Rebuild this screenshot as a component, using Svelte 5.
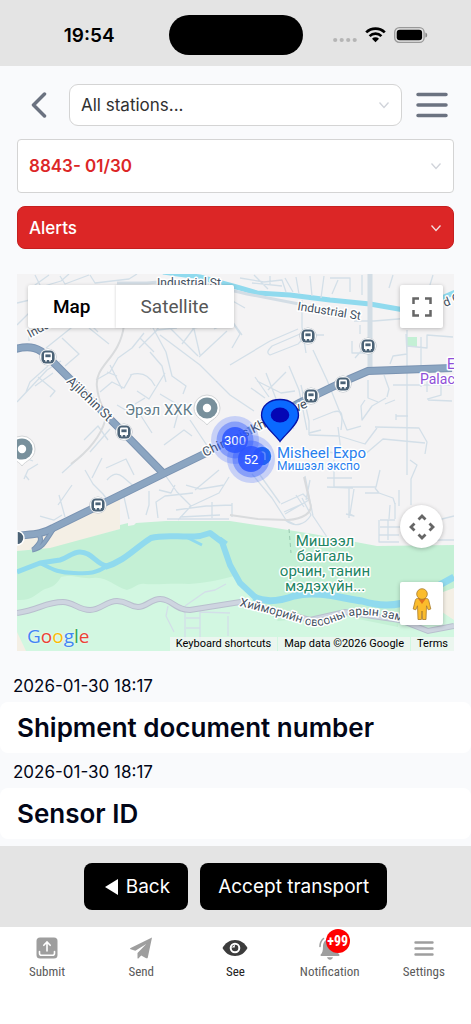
<script lang="ts">
  interface Record {
    date: string;
    title: string;
  }

  const records: Record[] = [
    { date: '2026-01-30 18:17', title: 'Shipment document number' },
    { date: '2026-01-30 18:17', title: 'Sensor ID' },
  ];

  const tabs = [
    { id: 'submit', label: 'Submit' },
    { id: 'send', label: 'Send' },
    { id: 'see', label: 'See' },
    { id: 'notification', label: 'Notification', badge: '+99' },
    { id: 'settings', label: 'Settings' },
  ];

  const busStops = [
    [48, 357],
    [124, 432],
    [98, 505],
    [308, 336],
    [368, 346],
    [343, 384],
    [311, 396],
  ];

  const places = [
    [207, 408],
    [22, 449],
  ];

  const clusters = [
    { x: 235, y: 440, count: 300 },
    { x: 251, y: 459, count: 52 },
  ];

  let activeTab = $state('see');
  let mapType = $state('map');
</script>

{#snippet chevron()}
  <svg class="chevron" viewBox="0 0 12 12" aria-hidden="true"><path d="M1.5 3.5 6 8.5l4.5-5" /></svg>
{/snippet}

<div class="app">
  <div class="status">
    <span class="time">19:54</span>
    <span class="island"></span>
    <div class="signals">
      <svg width="24" height="6" viewBox="0 0 24 6" fill="#b5b5b5">
        <circle cx="2.2" cy="3" r="2.1" /><circle cx="8.7" cy="3" r="2.1" />
        <circle cx="15.2" cy="3" r="2.1" /><circle cx="21.7" cy="3" r="2.1" />
      </svg>
      <svg width="21" height="16" viewBox="0 0 21 16" fill="none" stroke="#000" stroke-width="2.7">
        <path d="M1.2 5.4a13.4 13.4 0 0 1 18.6 0M4.6 9.1a8.5 8.5 0 0 1 11.8 0" />
        <path d="M10.5 15.2 7 11.8a5 5 0 0 1 7 0z" fill="#000" stroke="none" />
      </svg>
      <svg width="34" height="16" viewBox="0 0 34 16">
        <rect x=".7" y=".7" width="29.4" height="14.6" rx="4.6" fill="none" stroke="#999" stroke-width="1.3" />
        <rect x="2.7" y="2.7" width="25.4" height="10.6" rx="3" />
        <path d="M31.4 5.4c2.4.8 2.4 4.4 0 5.2z" fill="#888" />
      </svg>
    </div>
  </div>

  <main>
    <header class="topbar">
      <button class="icon-button" aria-label="Back">
        <svg width="16" height="26" viewBox="0 0 16 26"><path d="M13.5 2 2.5 13l11 11" /></svg>
      </button>
      <div class="field">
        <select class="stations" aria-label="Station">
          <option>All stations...</option>
        </select>
        {@render chevron()}
      </div>
      <button class="icon-button" aria-label="Menu">
        <svg width="32" height="26" viewBox="1 0 32 26"><path d="M3 2.5h28M3 13h28M3 23.5h28" /></svg>
      </button>
    </header>

    <div class="filters">
      <div class="field">
        <select class="shipment" aria-label="Shipment">
          <option>8843- 01/30</option>
        </select>
        {@render chevron()}
      </div>
      <div class="field light">
        <select class="alerts" aria-label="Alerts">
          <option>Alerts</option>
        </select>
        {@render chevron()}
      </div>
    </div>

    <section class="map" aria-label="Map">
      <svg class="canvas" viewBox="17 274 437 377" preserveAspectRatio="xMidYMid slice">
        <rect x="17" y="274" width="437" height="377" fill="#f4f3f4" />

        <!-- land cover -->
        <path d="M17 541 120 499v30L50 549l-33 2z" fill="#f4efe5" />
        <path d="M17 551 50 548 120 529v-4l8-2v3l6-1 2-2 30-2h64l33 5 50 8 64 12 77-1V651H17z" fill="#c4f0d5" />
        <path d="M17 600c16 1 18-6 28-11 8-2 12-5 16-12 12-3 18 2 32 1 14-2 20 8 34 12 8-2 10-7 18-6 12 1 24-1 44 0 16-1 26-3 45-8l20 22 50 5 60 7 40 5 50-12v48H17z" fill="#d2f7e1" />
        <path d="M255 600c24-20 60-8 110 0l35 7-2 20-60-12-60 6z" fill="#c4f0d5" />
        <path d="M17 632l9 19h-9zM454 588l-22 8 4 12 18 12z" fill="#f4efe5" />
        <rect x="407" y="337" width="10" height="10" fill="#c4f0d5" />

        <!-- rivers -->
        <g class="water">
          <path d="M163 272 200 277l40 11 17 5 33 2 40 5 40 4 40 7 34-14 14-6" stroke-width="5" />
          <path d="M17 572 40 563l20-3c8-2 12-8 20-8 12 0 16 12 27 14" stroke-width="5" />
          <path d="M40 563c12 6 18 10 34 10 16 1 22 0 33-7" stroke-width="4" />
          <path d="M105 567c20-6 30-19 46-29 14-4 32 0 49-2l10-3 12 9 8 23 10 18 15 14" stroke-width="6" />
          <path d="M186 537l16 8M220 538l7 5" stroke-width="3" />
          <path d="M254 597c12 6 26 4 40-1 24-6 50 3 68 5 16 5 36 6 54-3l38-21" stroke-width="7" />
        </g>

        <!-- minor streets -->
        <g class="streets">
          <path d="M17 325l20-20-2-20 14-10M35 275l6 12 20-6 8-7M17 303l17-4 12 8M60 276l5 8 24-9M90 275l5 8 34-4 8-5" />
          <path d="M46 348l30-24 24-10 12-16M26 392l4-10 18-16M17 402l30-32 14-9M62 338l17 16-14 12M89 328l20 16M84 318l14 14M29 341v-16M38 377l17 14-5 6M35 386l18-13" />
          <path d="M96 380l14-8 8-14 14-10 12-15M100 392l12-10 12 6 8-14M110 365l12 24M107 372l10 4M130 375c12-4 20 1 25 11M137 391l12 8 16-26M145 398l-10 6M150 352l12 14 4 16M139 348l18-18 20-2M154 352l-14-14" />
          <path d="M153 328l13 24 6 24 14 10-3 8M166 317l-10 14M150 328l26-14M176 315l18 14 6 26M182 344l12-16 20-4M160 335l40 30 30 30 24 16M170 328l28 28M199 357l28-26" />
          <path d="M214 329l18-8 10 14M200 290l24 20 16 24-8 14M215 291l30 17M117 405l17 10 22-9M84 440l14-14 10 14M90 452l20-23M102 458l-10 20M106 468l20-9 8 16M134 405l18 28M160 394l20 12-6 22M164 445l20-15 8 6M190 420l20 30" />
          <path d="M24 479l4-9 10-6M62 473l20-18M17 455l16 6M29 480l-4-5M85 470l8 14 10 10 3 4M107 480c5-6 10-8 16-3l14 12M58 505l14-20M59 495l6 22M40 516l14 4 8-5M124 497l5 22M149 491v14l-3 10M158 518l-2-16 9-6 28-3M163 472l14 20 14 14-13 14M176 510l30-4 26-1M159 490l12 3 4-8M195 490l24-20M186 485l14 4 24-4M167 519h62M180 517l40-2M212 502v16M232 503v14M189 507l30-14 10-16" />
          <path d="M240 278l24 4 18-2 4 12M270 276v8M285 278l8 14M296 277l3 17M310 276l2 20M324 276l-3 22M330 278h20v14M252 283l30 3M338 280l-6 14M362 275v20M254 275l14 14M393 275l-4 13M407 288l-2 22M433 275l-4 13" />
          <path d="M302 300v27l4 26M230 365l40-24 28-12M270 355l28-11c4-3 6-9 2-10l-28 12c-4 4-6 7-2 9zM313 350l14 30 20 50 14-4M255 377l14 20M266 373l14 36 14 20M289 366l10 24 8 40M301 385l8 36v14M265 398l-14-10M257 381l24 12 14-2M268 390l18-18" />
          <path d="M308 335h16M354 321h20l36-3M360 325v9M352 341v12h12M355 358l7-8M390 364l3-8 14-2-1-20M407 330v145M421 337v50M407 346l20 2v-13l26 2M393 385h60M427 370v22M441 375v20l-14 4M420 381h30M384 375l5 14-2 8M365 400l-4 6 1 14 10-14 14-8M428 400l24 1M396 416h12M396 420v-6M368 380v18l10 4M385 404l10-4" />
          <path d="M309 433l12-3M309 435l30 1 26 8 12-16M375 427l44 1 8 14-2 12M313 420l20-8c10-3 10 2 8 18M309 450l54 6 20-17 42 4M338 427l3 24M334 458v29h30M327 487l26 1M349 488v30M327 478h25M354 489l-4 25 4 2-8-2M362 487h14l4-17M375 488l4 5 14 5 2 6M410 460l7 5-6 14v26M399 490v16M365 493h14" />
          <path d="M252 474l20 24 14 22 10 5M260 475l20 28M281 504l22-10 6 6-24 14M284 512l18-8M296 495l8 12M285 520c10 8 20 5 26-5l-9-17M305 476l4 20 4 20 16 24M310 480l-4 20M379 520v22h20M380 527h22M388 520v20M380 520h15M390 505l-1 14M430 522l24-6M379 535h20M415 540h39M395 503v16" />
          <path d="M185 606l20-14 10-2 11-6M185 610v40M200 611v40M186 618h14M186 628h14M168 606l-2 10 8 16M200 612l30 1M228 616v20" />
        </g>
        <path d="M124 325c-4 34-30 40-27 62 2 22 12 24 8 34-4 14-16 30-34 43M230 515l28 4 30 1c14-1 26-7 22-17l-6-26" fill="none" stroke="#d9dbdd" stroke-width="2" />
        <path d="M289 529l2 24" stroke="#98c9b0" stroke-dasharray="4 3" />

        <!-- arterial roads -->
        <g class="collector">
          <path d="M370 272v95" stroke-width="5" />
          <path d="M117 283h30c36-4 60 1 100 11l52 10" stroke-width="3" />
        </g>
        <g class="park-road">
          <path d="M17 613c22-3 28-11 46-11 10 0 16 8 27 8s16-9 27-9 12 6 21 6 14-9 23-8c12 1 14 11 29 11l50-8 70 18 35-8 55 8 28 11 26-5" stroke-width="6" stroke="#b9bfce" />
          <path d="M17 613c22-3 28-11 46-11 10 0 16 8 27 8s16-9 27-9 12 6 21 6 14-9 23-8c12 1 14 11 29 11l50-8 70 18 35-8 55 8 28 11 26-5" stroke-width="4" stroke="#ced5e0" />
        </g>
        {#each [{ c: '#7a93b2', w: 8 }, { c: '#8ba5c1', w: 6 }] as layer}
          <g fill="none" stroke={layer.c} stroke-width={layer.w}>
            <path d="M15 349c16-4 24-1 33 8l75 75 40 41" />
            <path d="M15 536c16-2 26-1 38-8l47-23 67-33 68-33 64-36 46-22 23-10 84-3" />
            <path d="M37 533c6 5 4 10-4 17M54 528c-10 16-12 20-22 22" stroke-width={layer.w - 3} />
          </g>
        {/each}

        <!-- street names -->
        <g class="street-name">
          <text x="157" y="287">Industrial St</text>
          <text transform="translate(297 310) rotate(9)">Industrial St</text>
          <text transform="translate(30 338) rotate(-28)">Indust</text>
          <text transform="translate(445 307) rotate(-22)">d G</text>
          <text class="wide" transform="translate(66 382) rotate(44)">Ajilchin St</text>
          <text class="wide" transform="translate(205 457) rotate(-26)">Chinggis Khaan Ave</text>
          <path id="park-road-name" d="M239 606c26 6 44 11 62 17 16 6 26 2 42-5 18-6 40-2 64 5" fill="none" stroke="none" />
          <text><textPath href="#park-road-name">Хийморийн овооны арын зам</textPath></text>
        </g>

        {#each busStops as [x, y]}
          <g transform="translate({x} {y})">
            <circle r="8.6" fill="#b9c0c8" />
            <circle r="8" fill="#fff" />
            <rect x="-6.6" y="-6.6" width="13.2" height="13.2" rx="4.5" fill="#4b6276" />
            <path d="M-4-3q0-1.4 1.4-1.4h5.2q1.4 0 1.4 1.4v6h-1.2v1.5h-1.6V3h-2.4v1.5h-1.6V3H-4z" fill="#fff" />
            <path d="M-2.6-2.6h5.2V.2h-5.2z" fill="#4b6276" />
          </g>
        {/each}
        <path d="M17 531a7 7 0 0 1 0 14z" fill="#4b6276" stroke="#fff" stroke-width="1.5" />

        {#each places as [x, y]}
          <g transform="translate({x} {y})">
            <path d="M0 17c-3-5-13-7-13-17a13 13 0 0 1 26 0c0 10-10 12-13 17z" fill="#fff" stroke="#d3d5d7" />
            <circle r="10.6" fill="#78909c" />
            <circle r="4.2" fill="#fff" />
          </g>
        {/each}

        <text class="place" x="125" y="415">Эрэл ХХК</text>
        <g class="hotel">
          <text x="447" y="369">E</text>
          <text x="420" y="384">Palac</text>
        </g>
        <g class="park" text-anchor="middle">
          <text x="325" y="546">Мишээл</text>
          <text x="325" y="561">байгаль</text>
          <text x="325" y="576">орчин, танин</text>
          <text x="325" y="591">мэдэхүйн...</text>
        </g>
        <g class="expo">
          <text x="277" y="458">Misheel Expo</text>
          <text class="sub" x="277" y="470">Мишээл экспо</text>
        </g>

        <!-- shipment clusters -->
        <circle cx="262" cy="456" r="10" fill="#1a73e8" stroke="#fff" stroke-width="1.5" />
        <path d="M259 460v-5a3 3 0 0 1 6 0v5" fill="none" stroke="#9fc4fb" stroke-width="1.5" />
        {#each clusters as { x, y, count }}
          <g transform="translate({x} {y})" fill="#2b55ff">
            <circle r="24" opacity=".22" />
            <circle r="18.5" opacity=".4" />
            <circle r="13" opacity=".85" />
            <text class="count" y="5" text-anchor="middle">{count}</text>
          </g>
        {/each}
        <path d="M280 441.5c-4-6-18.5-17-18.500-26 0-10 8-16 18.500-16s18.500 6 18.500 16c0 9-14.500 20-18.500 26z" fill="#0a69ff" stroke="#0613a8" stroke-width="1.3" />
        <ellipse cx="280" cy="415" rx="9.3" ry="7.5" fill="#0406b5" />
      </svg>

      <div class="map-type">
        <button class:selected={mapType === 'map'} onclick={() => (mapType = 'map')}>Map</button>
        <button class:selected={mapType === 'satellite'} onclick={() => (mapType = 'satellite')}>Satellite</button>
      </div>
      <button class="control fullscreen" aria-label="Toggle fullscreen view">
        <svg width="20" height="20" viewBox="0 0 20 20" fill="none" stroke="#666" stroke-width="2.5">
          <path d="M1.5 7V1.5H7M13 1.5h5.5V7M18.5 13v5.5H13M7 18.5H1.5V13" />
        </svg>
      </button>
      <div class="camera">
        <button class="control round" aria-label="Map camera controls">
          <svg width="26" height="26" viewBox="0 0 26 26" fill="none" stroke="#666" stroke-width="2.8">
            <path d="M9.5 5.5 13 2l3.5 3.5M9.5 20.5 13 24l3.5-3.5M5.5 9.5 2 13l3.5 3.5M20.5 9.5 24 13l-3.5 3.5" />
          </svg>
        </button>
        <button class="control" aria-label="Street View">
          <svg width="20" height="32" viewBox="0 0 20 32" fill="#fbbc2c" stroke="#a77a2b" stroke-width=".8">
            <path d="M5.5 10.5h9c1.5 0 2 1 2.3 2.2l2 8.300-2.600.8-1.700-4L14 31.500h-3.400L10 23l-.6 8.500H6L5.500 17.800l-1.700 4L1.200 21l2-8.300c.3-1.200.8-2.200 2.300-2.200z" />
            <path d="M6 10.5h8L10 16z" fill="#e2711d" stroke="none" />
            <circle cx="10" cy="6" r="5.3" />
          </svg>
        </button>
      </div>
      <span class="google" aria-label="Google"
        ><i class="b">G</i><i class="r">o</i><i class="y">o</i><i class="b">g</i><i class="g">l</i><i class="r">e</i></span
      >
      <div class="credits">
        <button>Keyboard shortcuts</button>
        <span>Map data ©2026 Google</span>
        <a href="#terms">Terms</a>
      </div>
    </section>

    <div class="records">
      {#each records as record}
        <time>{record.date}</time>
        <h2>{record.title}</h2>
      {/each}
    </div>
  </main>

  <div class="actions">
    <button>
      <svg width="13" height="16" viewBox="0 0 13 16" fill="#fff"><path d="M13 0v16L0 8z" /></svg>
      Back
    </button>
    <button>Accept transport</button>
  </div>

  <nav class="tabs">
    {#each tabs as tab (tab.id)}
      <a href="#{tab.id}" class:active={activeTab === tab.id} onclick={() => (activeTab = tab.id)}>
        <span class="tab-icon">
          {#if tab.id === 'submit'}
            <svg width="22" height="22" viewBox="0 0 22 22">
              <rect x=".5" y=".5" width="21" height="21" rx="3.5" />
              <path d="M3.5 14.5v1.8c0 1.2.8 2 2 2h11c1.2 0 2-.8 2-2v-1.8M11 14V5.5M7.8 8.3 11 5l3.2 3.3" fill="none" stroke="#fff" stroke-width="1.6" stroke-linecap="round" />
            </svg>
          {:else if tab.id === 'send'}
            <svg width="22" height="22" viewBox="0 0 22 22">
              <path d="M22 .5 17.8 20.5c-.2.9-.9 1-1.6.7l-5-2.8-2.6 2.9c-.5.5-1.1.3-1.1-.4v-5L16.3 7 5.3 13.8.6 12.3c-.7-.3-.7-.9 0-1.2z" />
            </svg>
          {:else if tab.id === 'see'}
            <svg width="26" height="18" viewBox="0 0 26 18">
              <path d="M13 1C7.5 1 3.2 4 .5 9c2.700 5 7 8 12.500 8s9.800-3 12.500-8C22.800 4 18.500 1 13 1z" />
              <circle cx="13" cy="9" r="4.3" fill="none" stroke="#fff" stroke-width="2" />
              <path d="M9.5 8.5 13 5.5l-.3 3z" fill="#fff" />
            </svg>
          {:else if tab.id === 'notification'}
            <svg width="24" height="24" viewBox="0 0 24 24">
              <path d="M12 3c-4.500 0-7 3-7 7.500 0 4-.6 6.500-2.300 8-.4.400-.2 1.500.6 1.500h17.400c.8 0 1-1.100.6-1.500-1.700-1.500-2.300-4-2.300-8C19 6 16.500 3 12 3zM9 21.300h6c-.5 1.600-1.500 2.400-3 2.400s-2.500-.8-3-2.400z" />
              <path d="M2 10.5C2 7 3.2 4.5 5.5 2.5" fill="none" stroke="#9e9e9e" stroke-width="1.6" stroke-linecap="round" />
            </svg>
          {:else}
            <svg width="20" height="16" viewBox="0 0 20 16">
              <path d="M1.5 2.5h17M1.5 8.5h17M1.5 14.5h17" stroke="#9e9e9e" stroke-width="2.4" stroke-linecap="round" />
            </svg>
          {/if}
          {#if tab.badge}
            <span class="badge">{tab.badge}</span>
          {/if}
        </span>
        {tab.label}
      </a>
    {/each}
  </nav>
</div>

<style>
  :global(body) {
    margin: 0;
    background: #fff;
  }

  .app {
    display: flex;
    flex-direction: column;
    min-height: 100vh;
    font-family: Inter, sans-serif;
    color: #020617;
    overflow: hidden;
  }

  button,
  select {
    font: inherit;
    color: inherit;
    border: none;
    margin: 0;
    padding: 0;
    background: none;
    cursor: pointer;
  }

  /* Status bar */
  .status {
    display: grid;
    grid-template-columns: 1fr 134px 1fr;
    align-items: center;
    height: 66px;
    padding-top: 4px;
    box-sizing: border-box;
    background: #e4e4e4;
  }

  .time {
    justify-self: center;
    padding-left: 10px;
    font-size: 19px;
    font-weight: 600;
    color: #000;
  }

  .island {
    height: 40px;
    border-radius: 20px;
    background: #000;
  }

  .signals {
    display: flex;
    align-items: center;
    justify-content: center;
    gap: 8px;
    padding-right: 12px;
  }

  .signals svg:first-child {
    margin-top: 10px;
  }

  /* Filters */
  main {
    background: #f9fafc;
    padding-bottom: 7px;
  }

  .topbar {
    display: flex;
    align-items: center;
    gap: 14px;
    padding: 18px 23px 13px 31px;
  }

  .icon-button {
    display: flex;
  }

  .icon-button:first-child {
    padding-right: 8px;
  }

  .icon-button svg {
    fill: none;
    stroke: #6b7280;
    stroke-width: 3.5;
    stroke-linecap: round;
    stroke-linejoin: round;
  }

  .field {
    display: grid;
    flex: 1;
    align-items: center;
  }

  .field > :global(*) {
    grid-area: 1 / 1;
  }

  select {
    appearance: none;
    width: 100%;
    box-sizing: border-box;
    padding: 0 11px;
    border: 1px solid #d4d4d4;
    border-radius: 8px;
    background: #fff;
    font-size: 17px;
  }

  .stations {
    height: 42px;
    color: #303030;
    border-radius: 9px;
  }

  .shipment {
    height: 54px;
    border-radius: 4px;
    color: #dc2626;
    font-weight: 600;
  }

  .alerts {
    height: 43px;
    border-color: #c51f1f;
    background: #dc2626;
    color: #fff;
    font-weight: 500;
  }

  .chevron {
    justify-self: end;
    width: 12px;
    height: 12px;
    margin-right: 12px;
    fill: none;
    stroke: #d0d3da;
    stroke-width: 1.3;
    pointer-events: none;
  }

  .light .chevron {
    stroke: #f3dfe0;
  }

  .filters {
    display: flex;
    flex-direction: column;
    gap: 13px;
    padding: 0 17px;
  }

  /* Map */
  .map {
    position: relative;
    height: 377px;
    margin: 25px 17px 0;
    overflow: hidden;
    font-family: Roboto, sans-serif;
  }

  .canvas {
    display: block;
    width: 100%;
    height: 100%;
  }

  .water path {
    fill: none;
    stroke: #90daee;
    stroke-linejoin: round;
  }

  .streets path {
    fill: none;
    stroke: #d3dfe8;
    stroke-width: 1.3;
    stroke-linejoin: round;
  }

  .collector path {
    fill: none;
    stroke: #d3dde5;
  }

  .park-road path {
    fill: none;
  }

  .canvas text {
    font-size: 15px;
    stroke: #fff;
    stroke-width: 3px;
    stroke-linejoin: round;
    paint-order: stroke;
  }

  .canvas .street-name text {
    font-size: 12px;
    fill: #435061;
  }

  .canvas .street-name .wide {
    font-size: 13px;
  }

  .canvas .place {
    fill: #5f7b88;
  }

  .canvas .hotel text {
    font-size: 14px;
    fill: #8f4fd8;
  }

  .canvas .park text {
    fill: #228563;
  }

  .canvas .expo text {
    fill: #2880ee;
  }

  .canvas .expo .sub {
    font-size: 12px;
  }

  .canvas .count {
    font-size: 13px;
    fill: #fff;
    stroke: none;
  }

  .map-type {
    position: absolute;
    top: 11px;
    left: 11px;
    display: flex;
    border-radius: 2px;
    background: #fff;
    box-shadow: 0 1px 4px rgba(0, 0, 0, 0.2);
  }

  .map-type button {
    height: 43px;
    padding: 0 25px;
    font-size: 19px;
    color: #565656;
  }

  .map-type button + button {
    box-shadow: -1px 0 2px rgba(0, 0, 0, 0.1);
  }

  .map-type .selected {
    color: #000;
    font-weight: 500;
  }

  .control {
    display: grid;
    place-items: center;
    width: 43px;
    height: 43px;
    border-radius: 2px;
    background: #fff;
    box-shadow: 0 1px 4px rgba(0, 0, 0, 0.25);
  }

  .round {
    border-radius: 50%;
  }

  .fullscreen {
    position: absolute;
    top: 11px;
    right: 11px;
  }

  .camera {
    position: absolute;
    right: 11px;
    bottom: 26px;
    display: flex;
    flex-direction: column;
    gap: 34px;
  }

  .google {
    position: absolute;
    left: 10px;
    bottom: 4px;
    font: 500 19px/22px 'Open Sans', sans-serif;
    text-shadow: 0 0 2px #fff;
  }

  .google i {
    font-style: normal;
  }

  .b {
    color: #4285f4;
  }

  .r {
    color: #ea4335;
  }

  .y {
    color: #fbbc04;
  }

  .g {
    color: #34a853;
  }

  .credits {
    position: absolute;
    right: 0;
    bottom: 0;
    display: flex;
    gap: 1px;
    font-size: 11px;
    line-height: 14px;
    color: #000;
  }

  .credits > * {
    padding: 0 6px;
    background: rgba(245, 245, 245, 0.7);
    color: inherit;
    text-decoration: none;
  }

  /* Records */
  .records {
    padding-top: 16px;
  }

  time {
    display: block;
    padding: 3px 13px 0;
    font-size: 17px;
    line-height: 32px;
  }

  h2 {
    margin: 0;
    padding: 0 17px;
    border-radius: 8px;
    background: #fff;
    font-size: 26px;
    line-height: 51px;
    font-weight: 600;
  }

  /* Bottom bars */
  .actions {
    display: flex;
    justify-content: center;
    gap: 12px;
    padding: 17px;
    background: #e4e4e4;
  }

  .actions button {
    display: flex;
    align-items: center;
    gap: 8px;
    height: 47px;
    padding: 0 18px;
    border-radius: 8px;
    background: #000;
    color: #fff;
    font-size: 19px;
  }

  .actions button:first-child {
    padding-left: 21px;
  }

  .tabs {
    display: grid;
    grid-template-columns: repeat(5, 1fr);
    padding: 8px 0 34px;
    background: #fff;
    font-family: 'Roboto Condensed', Roboto, sans-serif;
  }

  .tabs a {
    display: flex;
    flex-direction: column;
    align-items: center;
    font-size: 13px;
    line-height: 22px;
    color: #5a5a5a;
    text-decoration: none;
  }

  .tab-icon {
    position: relative;
    display: grid;
    place-items: center;
    height: 26px;
    fill: #9e9e9e;
  }

  .tabs .active {
    color: #222;
  }

  .active .tab-icon {
    fill: #3c3c3c;
  }

  .badge {
    position: absolute;
    top: -6px;
    left: 8px;
    width: 24px;
    border-radius: 12px;
    background: #f00;
    color: #fff;
    font-size: 14px;
    font-weight: 700;
    line-height: 24px;
    text-align: center;
  }
</style>
